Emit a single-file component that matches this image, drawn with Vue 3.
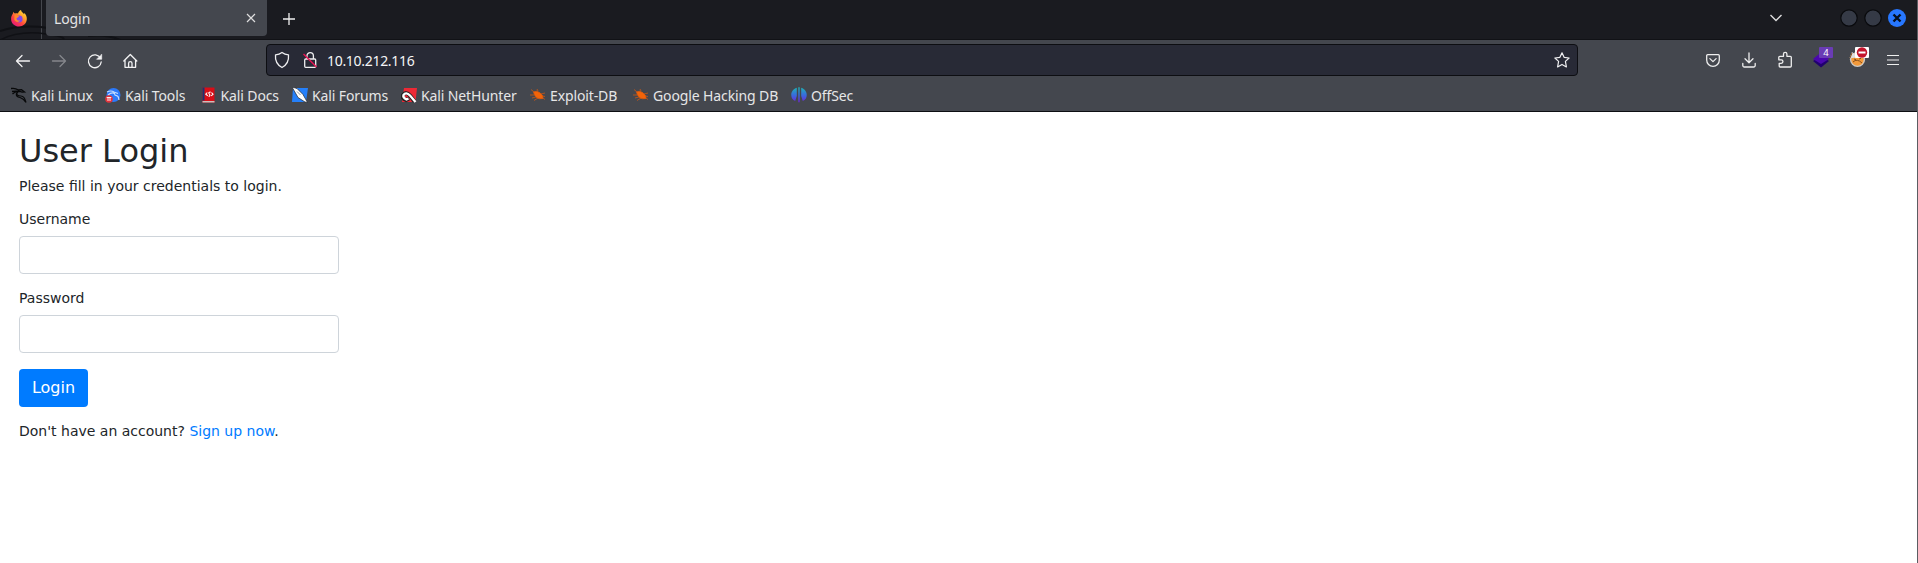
<script setup>
const bookmarks = [
  { id: 'linux', label: 'Kali Linux', w: 94 },
  { id: 'tools', label: 'Kali Tools', w: 95.5 },
  { id: 'docs', label: 'Kali Docs', w: 91.5 },
  { id: 'forums', label: 'Kali Forums', w: 109 },
  { id: 'hunter', label: 'Kali NetHunter', w: 129 },
  { id: 'bug', label: 'Exploit-DB', w: 103 },
  { id: 'bug', label: 'Google Hacking DB', w: 158 },
  { id: 'offsec', label: 'OffSec', w: 80 },
]
</script>

<template>
  <div class="window">
    <div class="tabs">
      <svg class="swirl" width="160" height="40" viewBox="0 0 160 40" fill="none" stroke="#101115">
        <path d="M0 31Q22 24 48 28M88 36Q108 34 120 40" stroke-width="2" />
        <path d="M0 40Q20 30 46 34T60 40" stroke-width="1.5" />
      </svg>
      <svg class="fox" width="16" height="17" viewBox="0 0 16 17">
        <defs>
          <linearGradient id="fx" x1="1" y1="0" x2="0.25" y2="1">
            <stop offset="0" stop-color="#fff044" /><stop offset=".38" stop-color="#ffa52b" />
            <stop offset=".68" stop-color="#ff453f" /><stop offset="1" stop-color="#e7177c" />
          </linearGradient>
        </defs>
        <path d="M10 0c.2 2 2 2.500 3 4.200.400-.600.400-1 .300-1.500C15 4.500 16 7 15.800 9.300 15.500 13.500 12.200 16.500 8 16.500S.2 13.400.1 9.200C0 6.500 1 5 1.800 3.800c.100-.800.400-1.500.9-2 .2 1 .6 1.400 1.300 1.800C5.200 3 6.300 3.200 7 3.500 7.200 2 8.500.6 10 0z" fill="url(#fx)" />
        <circle cx="8.200" cy="9" r="3.400" fill="#8148e8" />
        <path d="M3.500 5.200c2-.7 4 .3 4.800 1.300-1.500 0-1 1.400-2.800 1.700.1 2.200 2.300 2.900 3.700 1.800-.8 2.800-5 2.600-5.900-.500z" fill="#ff8a2c" />
      </svg>
      <div class="sep"></div>
      <div class="tab">
        <span>Login</span>
        <svg width="10" height="10" viewBox="0 0 10 10" stroke="#dedede" stroke-width="1.2"><path d="M1 1l8 8M9 1l-8 8" /></svg>
      </div>
      <svg class="plus" width="12" height="12" viewBox="0 0 12 12" stroke="#f0f0f0" stroke-width="1.300"><path d="M6 0v12M0 6h12" /></svg>
      <div class="grow"></div>
      <svg class="chev" width="14" height="8" viewBox="0 0 14 8" fill="none" stroke="#ddd" stroke-width="1.400"><path d="M1.500 1L7 6.500 12.500 1" /></svg>
      <svg class="wm" width="70" height="20" viewBox="0 0 70 20">
        <circle cx="10" cy="10" r="8.200" fill="#353a46" stroke="#090a0d" stroke-width="1.200" />
        <circle cx="34" cy="10" r="8.200" fill="#353a46" stroke="#090a0d" stroke-width="1.200" />
        <circle cx="58" cy="10" r="9" fill="#2777ff" />
        <path d="M54.500 6.500l7 7M61.500 6.500l-7 7" stroke="#06101f" stroke-width="2.400" />
      </svg>
    </div>

    <div class="nav">
      <svg class="navicons" width="124" height="20" viewBox="0 0 124 20" fill="none" stroke="#f2f2f3" stroke-width="1.300" stroke-linecap="round" stroke-linejoin="round">
        <path d="M14.500 10H1.500M7 4.500L1.500 10 7 15.500" />
        <path d="M37.500 10h13M45 4.500l5.500 5.500-5.500 5.500" stroke="#85878c" />
        <path d="M85.500 7.300A6.400 6.400 0 1 0 86.200 11" />
        <path d="M86.700 3.500v4.800h-4.800z" fill="#f2f2f3" stroke-width=".6" />
        <path d="M108.800 10l6.500-6.500 6.500 6.500M110 9v7.300h10.600V9M113.600 16.300v-4c0-1.100.700-1.700 1.700-1.700s1.700.6 1.700 1.700v4" />
      </svg>
      <div class="url">
        <svg width="46" height="18" viewBox="0 0 46 18" fill="none" stroke="#eeeef0" stroke-width="1.300" stroke-linejoin="round">
          <path d="M8 1.500c2 1.500 4 2.100 6.500 2.300.500 5.700-1.300 10-6.500 12.700C2.800 13.800 1 9.500 1.500 3.800 4 3.600 6 3 8 1.500z" />
          <path d="M33 8V4.800a3.200 3.200 0 0 1 6.400 0V8M31.700 8h9a1 1 0 0 1 1 1v6.300a1 1 0 0 1-1 1h-9a1 1 0 0 1-1-1V9a1 1 0 0 1 1-1z" />
          <path d="M29.500 3l13 13" stroke="#e81252" stroke-width="1.400" />
        </svg>
        <span>10.10.212.116</span>
        <svg width="16" height="16" viewBox="0 0 16 16" fill="none" stroke="#f0f0f2" stroke-width="1.200" stroke-linejoin="round">
          <path d="M8 .8l2.100 4.500 5 .7-3.700 3.400 1 5.500L8 12.400l-4.400 2.500 1-5.500L.9 6l5-.7z" />
        </svg>
      </div>
      <div class="actions">
        <svg width="14" height="13" viewBox="0 0 14 13" fill="none" stroke="#eee" stroke-width="1.300" stroke-linecap="round" stroke-linejoin="round"><path d="M1.700.7h10.600a1 1 0 0 1 1 1v4.200c0 3.600-2.700 6.400-6.300 6.400S.7 9.500.7 5.900V1.700a1 1 0 0 1 1-1zM3.900 4.600L7 7.600l3.100-3" /></svg>
        <svg width="14" height="16" viewBox="0 0 14 16" fill="none" stroke="#eee" stroke-width="1.300" stroke-linecap="round" stroke-linejoin="round"><path d="M7 1v9.500M3 6.800l4 4 4-4M.8 11.500v2a1.500 1.500 0 0 0 1.500 1.500h9.400a1.500 1.500 0 0 0 1.500-1.500v-2" /></svg>
        <svg width="14" height="17" viewBox="0 0 14 17" fill="none" stroke="#eee" stroke-width="1.300" stroke-linejoin="round"><path d="M5.500 5.300V3a1.700 1.700 0 0 1 3.400 0v2.300h3.400a1 1 0 0 1 1 1V15a1 1 0 0 1-1 1H2.200a1 1 0 0 1-1-1v-2.700h2a1.700 1.700 0 0 0 0-3.500H.8V6.300a1 1 0 0 1 1-1z" /></svg>
        <svg class="layers" width="20" height="22" viewBox="0 0 20 22">
          <path d="M0 14l8-5 8 5-8 6.500z" fill="#21006f" /><path d="M0 12l8-6.500L16 12l-8 5z" fill="#4b08ae" />
          <rect x="6" y="0" width="14" height="11" rx="1" fill="#6a3cb5" />
          <text x="13" y="9" text-anchor="middle" font-family="Noto Sans" font-size="9.500" fill="#fff">4</text>
        </svg>
        <svg class="fp" width="20" height="22" viewBox="0 0 20 22">
          <circle cx="8.500" cy="12.500" r="7.600" fill="#cfcac4" /><circle cx="8.500" cy="12.500" r="6.200" fill="#f39a3b" />
          <path d="M.5 11L3 5l4 3 5 .5-3 2-6 .5z" fill="#ddd" /><path d="M1 11l2-5M4 15q4-4 9 1M5 12l2 .7M10 12l2-.7" stroke="#86501d" fill="none" />
          <rect x="6" y="0" width="14" height="11" rx="1" fill="#fff" /><circle cx="13" cy="5.500" r="5.200" fill="#c4142c" /><path d="M9.500 4.500h7v2h-7z" fill="#fff" />
        </svg>
        <svg width="12" height="12" viewBox="0 0 12 12" stroke="#eee" stroke-width="1.200"><path d="M0 1.500h12M0 6h12M0 10.500h12" /></svg>
      </div>
    </div>

    <div class="marks">
      <div v-for="b in bookmarks" :key="b.label" class="mark" :style="{ width: b.w + 'px' }">
        <svg v-if="b.id === 'linux'" width="16" height="16" viewBox="0 0 16 16" fill="none" stroke="#08090a">
          <path d="M0 1.500Q4 .7 7.500 3l3-.3 3 2.300-2.500.2-2-.7Q5 3.600 1 4.500M1.500 7Q4 4.500 7 4.700" stroke-width="1.300" />
          <path d="M7 4.500C4 7.500 7 9 10 9s4 2 5 6.500Q12.500 11.500 9 10.500 4.500 10 5.500 6" stroke-width="1.200" />
        </svg>
        <svg v-else-if="b.id === 'tools'" width="16" height="16" viewBox="0 0 16 16" fill="none">
          <circle cx="8.500" cy="8" r="7" fill="#2b79fa" />
          <path d="M2 5Q6 3 9 5l4 1.500M3 8q4-3.500 6.500-1.500 0 2 2 2.200t2.500 4.300" stroke="#c5dcff" stroke-width="1.200" />
          <circle cx="4" cy="12" r="3.800" fill="#e2333b" /><path d="M1.700 10.500h4.600M3 10.500V14M5 10.500V14" stroke="#fff" stroke-width=".9" />
        </svg>
        <svg v-else-if="b.id === 'docs'" width="16" height="16" viewBox="0 0 16 16" fill="none">
          <path d="M1.500.5h12v15h-12z" fill="#d90d17" /><path d="M1.500.5h2v13h-2z" fill="#183672" /><path d="M1.500 14h12v1.500h-12z" fill="#c9c1bd" />
          <path d="M6.300 5.500L4.800 7.200l2 1.500M10.500 5.500l1.500 1.800-1.800 1.500M9.700 5Q6.800 5.300 8.300 7T7.600 9.600" stroke="#fff" stroke-width="1.100" />
        </svg>
        <svg v-else-if="b.id === 'forums'" width="16" height="16" viewBox="0 0 16 16">
          <path d="M1 1h15l-2 14H0z" fill="#2580fa" /><path d="M0 0l5 1.500 6 6 4.500 8-2.500-.5L6 10.500z" fill="#fff" stroke="#202329" stroke-width=".7" /><path d="M5 4.500l3.500 3.500" stroke="#8f949c" />
        </svg>
        <svg v-else-if="b.id === 'hunter'" width="16" height="16" viewBox="0 0 16 16" fill="none">
          <path d="M3 1h13l-1.500 14H1z" fill="#ed2935" /><path d="M13.500 14.500L9 8.500Q5 4 2 8q-1.500 3 3 5l3-1.500" stroke="#222" stroke-width="4" />
          <path d="M14.500 15L9 8.500Q5 4.500 2.500 8q-1 2.500 3 4.500l2-1" stroke="#fff" stroke-width="2.300" />
        </svg>
        <svg v-else-if="b.id === 'bug'" width="16" height="16" viewBox="0 0 16 16" stroke="#dc590d" stroke-width=".7">
          <path d="M3.500 5q3-2 6.500.8t3 5.700Q9 12.500 6.500 10.500T3.500 5z" fill="#f36409" />
          <path d="M4 5L1 2.500M8 4L7 2M11 7l4-1M12 9l3 .5M4 8L0 8M6 10l-4 1M8 11l-4 2.500M13 11l2 1.500" fill="none" />
        </svg>
        <svg v-else width="16" height="16" viewBox="0 0 16 16">
          <defs><linearGradient id="os" x1="0" y1="0" x2="0" y2="1"><stop offset="0" stop-color="#1db4b4" /><stop offset=".5" stop-color="#386cdd" /><stop offset="1" stop-color="#7020d8" /></linearGradient></defs>
          <path d="M5.800.8C-1.400 3-1.200 12 4.200 14L5.800 9zM10.200.8c7.200 2.200 7 11.200 1.600 13.200L10.200 9zM7.300.3h1.400v14.500l-.7 1-.7-1z" fill="url(#os)" />
        </svg>
        <span>{{ b.label }}</span>
      </div>
    </div>

    <main class="page">
      <h2>User Login</h2>
      <p>Please fill in your credentials to login.</p>
      <label>Username</label>
      <input type="text">
      <label>Password</label>
      <input type="password">
      <button>Login</button>
      <p>Don't have an account? <a>Sign up now</a>.</p>
    </main>
  </div>
</template>

<style>
body { margin: 0; overflow: hidden; }
</style>

<style scoped>
.window { width: 1918px; height: 563px; box-sizing: border-box; border-right: 1px solid #5b5d62; display: flex; flex-direction: column; background: #fff; font-family: "Noto Sans", sans-serif; overflow: hidden; }
svg { display: block; flex: none; }
span { white-space: nowrap; }
.tabs { position: relative; height: 40px; box-sizing: border-box; display: flex; background: #1a1b20; border-bottom: 1px solid #111216; flex: none; }
.swirl { position: absolute; left: 0; top: 0; }
.fox { position: relative; margin: 10px 0 0 11px; }
.sep { width: 1px; background: #45474d; margin-left: 14px; }
.tab { position: relative; width: 221px; height: 36px; margin-left: 4px; box-sizing: border-box; padding: 0 11px 0 8px; display: flex; align-items: center; justify-content: space-between; background: #44474e; border-radius: 0 0 4px 4px; color: #e4e4e5; font-size: 14px; letter-spacing: -0.1px; }
.plus { margin: 13px 0 0 16px; }
.grow { flex: 1; }
.chev { margin: 14px 56px 0 0; }
.wm { margin: 8px 8px 0 0; }
.nav { height: 40px; display: flex; background: #44474e; flex: none; }
.navicons { margin: 11px 0 0 15px; }
.url { width: 1312px; height: 32px; margin: 4px 0 0 127px; box-sizing: border-box; border: 1px solid #0d0e12; border-radius: 4px; background: #282a36; display: flex; align-items: center; padding: 0 7px; color: #f5f5f6; font-size: 14px; }
.url span { flex: 1; margin-left: 7px; letter-spacing: -0.3px; }
.actions { margin-left: 128px; display: flex; align-items: center; height: 40px; }
.actions svg + svg { margin-left: 22px; }
.actions svg:nth-child(3) { margin-bottom: 1px; }
.actions svg.layers { margin-bottom: 5px; margin-left: 21px; }
.actions svg.fp { margin-bottom: 5px; margin-left: 16px; }
.actions svg:last-child { margin-left: 18px; }
.marks { height: 32px; box-sizing: border-box; display: flex; padding-left: 11px; background: #44474e; border-bottom: 1px solid #0d0e12; flex: none; }
.mark { display: flex; align-items: center; gap: 4px; color: #e6e6e7; font-size: 14px; letter-spacing: -0.12px; height: 31px; flex: none; }
.mark svg, .mark span { margin-bottom: 1px; }
.page { flex: 1; padding: 20px 0 0 19px; font: 14px "DejaVu Sans", sans-serif; line-height: 17px; color: #212529; }
h2 { font-size: 32px; line-height: 38px; font-weight: 400; margin: 0 0 8px; }
p { margin: 0 0 16px; }
label { display: block; margin-bottom: 8px; }
input { display: block; width: 320px; height: 38px; box-sizing: border-box; border: 1px solid #ced4da; border-radius: 4px; margin: 0 0 16px; background: #fff; }
button { display: block; height: 38px; width: 69px; padding: 0; border: 0; border-radius: 4px; background: #007bff; color: #fff; font: 16px/24px "DejaVu Sans", sans-serif; margin: 0 0 16px; }
a { color: #007bff; }
</style>
